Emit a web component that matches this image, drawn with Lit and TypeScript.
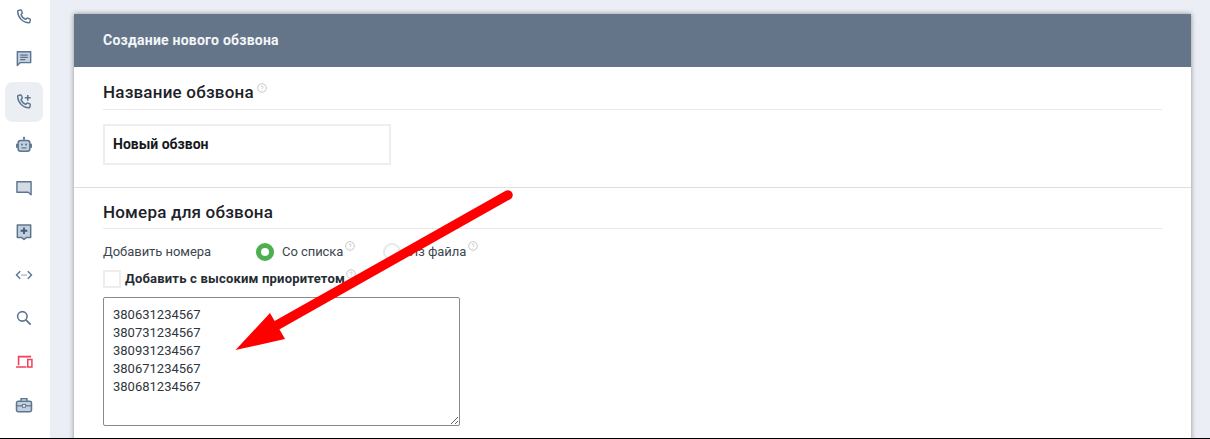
import { LitElement, html, css, svg } from "lit";
import { customElement } from "lit/decorators.js";

const NUMBERS = ["380631234567", "380731234567", "380931234567", "380671234567", "380681234567"].join("\n");

const phone = svg`<path d="M5.2 4.2l2.6-.6c.5-.1.9.1 1.1.6l1 2.6c.2.4.1.8-.3 1.1L8.400 9.100c.9 2.700 3 4.800 5.700 5.800l1.300-1.300c.3-.3.8-.4 1.200-.2l2.400 1c.5.2.7.6.6 1.100l-.6 2.500c-.1.500-.5.800-1 .8C10.400 18.800 4.500 12.400 4.400 5.200c0-.5.300-.9.800-1z" fill="none" stroke="currentColor" stroke-width="1.700" stroke-linejoin="round"/>`;

const ICONS = [
  { cls: "top", icon: phone },
  { cls: "top", icon: svg`<path d="M4 4.500h16v13H7.500L4 21z" fill="#c3cfdb" stroke="currentColor" stroke-width="1.700" stroke-linejoin="round"/><path d="M7.500 8.500h9M7.500 11.300h9M7.500 14h6" stroke="currentColor" stroke-width="1.500"/>` },
  { cls: "active", icon: svg`${phone}<path d="M16.500 3.500v7M13 7h7" stroke="currentColor" stroke-width="1.800"/>` },
  { cls: "", icon: svg`<path d="M12 3v3" stroke="currentColor" stroke-width="1.600"/><circle cx="12" cy="3.500" r="1.300" fill="currentColor"/><rect x="5" y="6.500" width="14" height="13" rx="3" fill="#c3cfdb" stroke="currentColor" stroke-width="1.800"/><rect x="2.500" y="10.500" width="2.500" height="5" fill="currentColor"/><rect x="19" y="10.500" width="2.500" height="5" fill="currentColor"/><circle cx="9.500" cy="11.500" r="1.200" fill="currentColor"/><circle cx="14.500" cy="11.500" r="1.200" fill="currentColor"/><path d="M9 15.500h6" stroke="currentColor" stroke-width="1.400"/>` },
  { cls: "", icon: svg`<path d="M3.500 4.500h17V20l-3.500-3H3.500z" fill="#d3dbe4" stroke="currentColor" stroke-width="1.700" stroke-linejoin="round"/>` },
  { cls: "", icon: svg`<path d="M4 3.500h16v15h-5l-3 2.500-3-2.500H4z" fill="#c3cfdb" stroke="currentColor" stroke-width="1.800" stroke-linejoin="round"/><path d="M12 6.500v8M8 10.500h8" stroke="#3f5a78" stroke-width="2.200"/>` },
  { cls: "", icon: svg`<path d="M7.500 7.500L3 12l4.500 4.500M16.500 7.500L21 12l-4.500 4.500" fill="none" stroke="currentColor" stroke-width="1.700"/><path d="M9 12h1.300M11.400 12h1.300M13.800 12h1.300" stroke="currentColor" stroke-width="1.500"/>` },
  { cls: "", icon: svg`<circle cx="10" cy="10" r="5.700" fill="none" stroke="currentColor" stroke-width="1.900"/><path d="M14.200 14.200L20 20" stroke="currentColor" stroke-width="2.100"/>` },
  { cls: "red", icon: svg`<path d="M5.500 16V5.500h15M2.500 18h12.500" fill="none" stroke="currentColor" stroke-width="1.900"/><rect x="16.500" y="9" width="5" height="9" fill="none" stroke="currentColor" stroke-width="1.800"/>` },
  { cls: "", icon: svg`<path d="M8.500 7.500v-3h7v3" fill="none" stroke="currentColor" stroke-width="1.700"/><rect x="3" y="7.500" width="18" height="12.500" rx="2" fill="#c3cfdb" stroke="currentColor" stroke-width="1.800"/><path d="M3 13h18" stroke="currentColor" stroke-width="1.500"/><rect x="10.300" y="11.300" width="3.400" height="3.400" fill="#fff" stroke="currentColor" stroke-width="1.200"/>` },
];

@customElement("app-root")
export class AppRoot extends LitElement {
  static styles = css`
    :host {
      display: block;
      position: relative;
      height: 439px;
      overflow: hidden;
      background: #ebeef4;
      font-family: "Roboto", "Liberation Sans", sans-serif;
      color: #1c2229;
    }
    * { box-sizing: border-box; }
    .layout { display: flex; height: 438px; overflow: hidden; }
    .sidebar {
      width: 50px;
      flex: none;
      background: #fff;
      margin-top: -4px;
      padding: 0 7px 0 5px;
      display: flex;
      flex-direction: column;
    }
    .nav {
      display: flex;
      align-items: center;
      justify-content: center;
      flex: none;
      height: 43.33px;
      color: #5c7590;
      border-radius: 8px;
    }
    .nav svg { width: 20px; height: 20px; }
    .nav.top { height: 41.5px; }
    .nav.active { background: #ebeef2; height: 40px; margin: 3px 0 1.33px; }
    .nav.red { color: #f2405c; }
    .main { flex: 1; padding: 14px 19px 0 24px; min-width: 0; }
    .card {
      background: #fff;
      box-shadow: 0 0 5px rgba(0, 0, 0, 0.42);
      height: 440px;
    }
    .card-head {
      height: 53px;
      background: #64758a;
      color: #f4f6f8;
      padding: 0 0 2px 29px;
      display: flex;
      align-items: center;
      font-size: 14px;
      font-weight: 700;
      letter-spacing: 0.23px;
    }
    .section { padding: 0 29px; }
    .first { height: 121px; border-bottom: 1px solid #dedede; padding-top: 14px; }
    .title {
      display: flex;
      align-items: flex-start;
      gap: 3px;
      height: 29px;
      border-bottom: 1px solid #e8e8e8;
      font-size: 17px;
      font-weight: 500;
      line-height: 22px;
      letter-spacing: 0.2px;
    }
    .hint {
      width: 10px;
      height: 10px;
      flex: none;
      margin-top: 2px;
      color: #c8c8c8;
    }
    .name {
      margin-top: 14px;
      width: 288px;
      height: 41px;
      border: 2px solid #eeeeee;
      display: flex;
      align-items: center;
      padding: 0 0 2px 8px;
      font-size: 14px;
      font-weight: 700;
      color: #14181d;
    }
    .second { padding-top: 13px; }
    .second .title { height: 28px; }
    .row {
      display: flex;
      align-items: center;
      height: 18px;
      margin-top: 14px;
      font-size: 13px;
      color: #3d4650;
      letter-spacing: -0.05px;
    }
    .row-label { width: 153px; padding-bottom: 2px; }
    .radio {
      width: 18px;
      height: 18px;
      flex: none;
      border-radius: 50%;
      border: 2px solid #e6e8ec;
      margin-right: 8px;
    }
    .radio.on { border: 5px solid #4caf50; }
    .opt { display: flex; align-items: center; }
    .opt-text { padding-bottom: 2px; }
    .opt .hint { align-self: flex-start; margin: -2px 0 0 2px; }
    .opt1 { width: 127px; }
    .check-row { display: flex; align-items: center; margin-top: 9px; height: 18px; }
    .check {
      width: 18px;
      height: 18px;
      flex: none;
      border: 2px solid #eeeeee;
      margin-right: 4px;
    }
    .check-label {
      font-size: 13px;
      font-weight: 700;
      letter-spacing: 0.2px;
      color: #262c33;
      padding-bottom: 2px;
    }
    .check-row .hint { align-self: flex-start; margin: -1px 0 0 1px; }
    textarea {
      display: block;
      margin-top: 9px;
      width: 357px;
      height: 129px;
      padding: 8px 9px;
      border: 1px solid #8a8a8a;
      border-radius: 2px;
      outline: none;
      font-family: inherit;
      font-size: 13px;
      line-height: 18px;
      color: #2f363d;
      background: #fff;
    }
    .bottom { height: 1px; background: #000; }
    .arrow {
      position: absolute;
      inset: 0;
      width: 1210px;
      height: 439px;
      pointer-events: none;
    }
  `;

  private hint() {
    return html`<svg class="hint" viewBox="0 0 10 10">
      <circle cx="5" cy="5" r="4.300" fill="none" stroke="currentColor"></circle>
      <path d="M3.800 4c0-1.500 2.400-1.500 2.400 0 0 .9-1.200.9-1.200 2M5 7v.8" fill="none" stroke="currentColor" stroke-width=".8"></path>
    </svg>`;
  }

  render() {
    return html`
      <div class="layout">
        <nav class="sidebar">
          ${ICONS.map(
            (i) => html`<div class="nav ${i.cls}">
              <svg viewBox="0 0 24 24">${i.icon}</svg>
            </div>`
          )}
        </nav>
        <main class="main">
          <div class="card">
            <div class="card-head">Создание нового обзвона</div>
            <section class="section first">
              <div class="title">Название обзвона ${this.hint()}</div>
              <div class="name">Новый обзвон</div>
            </section>
            <section class="section second">
              <div class="title">Номера для обзвона</div>
              <div class="row">
                <span class="row-label">Добавить номера</span>
                <span class="opt opt1"><span class="radio on"></span><span class="opt-text">Со списка</span> ${this.hint()}</span>
                <span class="opt"><span class="radio"></span><span class="opt-text">Из файла</span> ${this.hint()}</span>
              </div>
              <div class="check-row">
                <span class="check"></span>
                <span class="check-label">Добавить с высоким приоритетом</span>
                ${this.hint()}
              </div>
              <textarea .value=${NUMBERS}></textarea>
            </section>
          </div>
        </main>
      </div>
      <div class="bottom"></div>
      <svg class="arrow" viewBox="0 0 1210 439">
        <path d="M508 195L272 328" stroke="#ff0000" stroke-width="9.500" stroke-linecap="round"></path>
        <path d="M235.500 350L270 313L285 339Z" fill="#ff0000"></path>
      </svg>
    `;
  }
}
